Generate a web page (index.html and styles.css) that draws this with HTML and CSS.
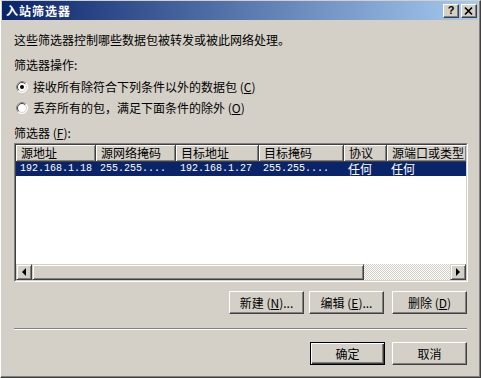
FILE: index.html
```html
<!DOCTYPE html>
<html lang="zh-CN">
<head>
  <meta charset="UTF-8" />
  <title>入站筛选器</title>
  <link rel="stylesheet" href="styles.css">
</head>
<body>
  <div class="window">
    <div class="titlebar">
      <span class="title">入站筛选器</span>
      <div class="caption-btns">
        <span class="cap-btn help">?</span>
        <span class="cap-btn close">
          <svg width="14" height="12" viewBox="0 0 14 12"><path d="M3 2.5 L10 9.5 M10 2.5 L3 9.5" stroke="#000" stroke-width="1.7" fill="none"/></svg>
        </span>
      </div>
    </div>

    <div class="content">
      <p class="desc">这些筛选器控制哪些数据包被转发或被此网络处理。</p>
      <p class="label ops">筛选器操作:</p>

      <div class="radio first">
        <svg class="radio-mark" width="12" height="12" viewBox="0 0 12 12">
          <circle cx="6" cy="6" r="5.5" fill="#fff" stroke="#fff"/>
          <path d="M2.1 9.9 A5.5 5.5 0 0 1 9.9 2.1" stroke="#808080" fill="none"/>
          <path d="M2.8 9.2 A4.5 4.5 0 0 1 9.2 2.8" stroke="#404040" fill="none"/>
          <path d="M9.2 2.8 A4.5 4.5 0 0 1 2.8 9.2" stroke="#d4d0c8" fill="none"/>
          <circle cx="6" cy="6" r="2" fill="#000"/>
        </svg>
        <span>接收所有除符合下列条件以外的数据包 (<u>C</u>)</span>
      </div>
      <div class="radio second">
        <svg class="radio-mark" width="12" height="12" viewBox="0 0 12 12">
          <circle cx="6" cy="6" r="5.5" fill="#fff" stroke="#fff"/>
          <path d="M2.1 9.9 A5.5 5.5 0 0 1 9.9 2.1" stroke="#808080" fill="none"/>
          <path d="M2.8 9.2 A4.5 4.5 0 0 1 9.2 2.8" stroke="#404040" fill="none"/>
          <path d="M9.2 2.8 A4.5 4.5 0 0 1 2.8 9.2" stroke="#d4d0c8" fill="none"/>
        </svg>
        <span>丢弃所有的包，满足下面条件的除外 (<u>O</u>)</span>
      </div>

      <p class="label filters">筛选器 (<u>F</u>):</p>

      <div class="listbox">
        <div class="list-inner">
          <div class="list-area">
            <div class="list-header">
              <span class="col c1">源地址</span>
              <span class="col c2">源网络掩码</span>
              <span class="col c3">目标地址</span>
              <span class="col c4">目标掩码</span>
              <span class="col c5">协议</span>
              <span class="col c6">源端口或类型</span>
            </div>
            <div class="list-row selected">
              <span class="cell c1 num">192.168.1.18</span>
              <span class="cell c2 num">255.255....</span>
              <span class="cell c3 num">192.168.1.27</span>
              <span class="cell c4 num">255.255....</span>
              <span class="cell c5">任何</span>
              <span class="cell c6">任何</span>
            </div>
          </div>
          <div class="hscroll">
            <span class="sb-btn">
              <svg width="14" height="14" viewBox="0 0 14 14"><polygon points="5,7 9,3 9,11" fill="#000"/></svg>
            </span>
            <span class="sb-thumb"></span>
            <span class="sb-track"></span>
            <span class="sb-btn">
              <svg width="14" height="14" viewBox="0 0 14 14"><polygon points="9,7 5,3 5,11" fill="#000"/></svg>
            </span>
          </div>
        </div>
      </div>

      <div class="actions list-actions">
        <button class="btn btn-new">新建 (<u>N</u>)...</button>
        <button class="btn btn-edit">编辑 (<u>E</u>)...</button>
        <button class="btn">删除 (<u>D</u>)</button>
      </div>

      <div class="separator"></div>

      <div class="actions dialog-actions">
        <button class="btn default">确定</button>
        <button class="btn">取消</button>
      </div>
    </div>
  </div>
</body>
</html>
```

FILE: styles.css
```css
html, body {
  margin: 0;
  padding: 0;
  background: #d4d0c8;
}

body {
  font-family: "Noto Sans CJK SC", "Liberation Sans", sans-serif;
  font-size: 12px;
  line-height: 14px;
  color: #000;
}

.window {
  width: 481px;
  height: 378px;
  box-sizing: border-box;
  background: #d4d0c8;
  border-top: 1px solid #d4d0c8;
  border-left: 1px solid #fff;
  border-right: 1px solid #404040;
  border-bottom: 1px solid #404040;
  box-shadow: inset -1px -1px #808080;
  padding: 0 2px 0 1px;
}

.titlebar {
  height: 19px;
  display: flex;
  align-items: center;
  background: linear-gradient(to right, #0a246a, #a6caf0);
  padding-left: 4px;
}

.title {
  color: #fff;
  font-weight: bold;
  letter-spacing: 1px;
}

.caption-btns {
  margin-left: auto;
  display: flex;
  gap: 2px;
  margin-right: 1px;
}

.cap-btn {
  width: 16px;
  height: 14px;
  box-sizing: border-box;
  background: #d4d0c8;
  border: 1px solid;
  border-color: #fff #404040 #404040 #fff;
  box-shadow: inset -1px -1px #808080;
  display: flex;
  align-items: center;
  justify-content: center;
}

.help {
  font-family: "Liberation Sans", sans-serif;
  font-weight: bold;
  font-size: 11px;
  line-height: 11px;
}

.content {
  padding: 0 10px 0 12px;
}

.desc,
.label {
  margin: 0;
  height: 14px;
}

.desc {
  margin-top: 13px;
}

.ops {
  margin-top: 11px;
}

.radio {
  display: flex;
  align-items: center;
  height: 14px;
  padding-left: 2px;
}

.radio-mark {
  margin-right: 5px;
}

.radio.first {
  margin-top: 8px;
}

.radio.second {
  margin-top: 7px;
}

.filters {
  margin-top: 11px;
}

.listbox {
  margin-top: 3px;
  height: 139px;
  box-sizing: border-box;
  border: 1px solid;
  border-color: #808080 #fff #fff #808080;
}

.list-inner {
  height: 100%;
  box-sizing: border-box;
  border: 1px solid;
  border-color: #404040 #d4d0c8 #d4d0c8 #404040;
  background: #fff;
  display: flex;
  flex-direction: column;
  overflow: hidden;
}

.list-area {
  flex: 1;
  overflow: hidden;
}

.list-header,
.list-row {
  display: flex;
  white-space: nowrap;
}

.list-header {
  height: 17px;
}

.col {
  flex: none;
  box-sizing: border-box;
  background: #d4d0c8;
  border-right: 1px solid #404040;
  border-bottom: 1px solid #404040;
  box-shadow: inset 1px 1px #fff, inset -1px -1px #808080;
  padding: 1px 0 0 5px;
  overflow: hidden;
}

.c1 { width: 80px; }
.c2 { width: 80px; }
.c3 { width: 83px; }
.c4 { width: 85px; }
.c5 { width: 43px; }
.c6 { width: 80px; }

.list-row {
  height: 14px;
}

.list-row.selected {
  background: #0a246a;
  color: #fff;
}

.cell {
  flex: none;
  box-sizing: border-box;
  padding-left: 4px;
  line-height: 14px;
}

.num {
  font-family: "Liberation Mono", monospace;
  font-size: 10px;
}

.hscroll {
  height: 16px;
  display: flex;
  flex: none;
}

.sb-btn,
.sb-thumb {
  box-sizing: border-box;
  background: #d4d0c8;
  border: 1px solid;
  border-color: #d4d0c8 #404040 #404040 #d4d0c8;
  box-shadow: inset 1px 1px #fff, inset -1px -1px #808080;
}

.sb-btn {
  width: 16px;
  display: flex;
  align-items: center;
  justify-content: center;
}

.sb-thumb {
  width: 332px;
}

.sb-track {
  flex: 1;
  background: repeating-conic-gradient(#fff 0 25%, #d4d0c8 0 50%) 0 0 / 2px 2px;
}

.actions {
  display: flex;
  justify-content: flex-end;
  padding-right: 1px;
}

.list-actions {
  margin-top: 9px;
}

.btn {
  width: 75px;
  height: 23px;
  box-sizing: border-box;
  margin: 0;
  padding: 0;
  font-family: inherit;
  font-size: 12px;
  line-height: 14px;
  color: #000;
  background: #d4d0c8;
  border: 1px solid;
  border-color: #fff #404040 #404040 #fff;
  box-shadow: inset -1px -1px #808080;
}

.btn-new {
  margin-right: 5px;
}

.btn-edit {
  margin-right: 8px;
}

.btn.default {
  border: 1px solid #000;
  box-shadow: inset 1px 1px #fff, inset -1px -1px #404040, inset -2px -2px #808080;
  margin-right: 7px;
}

.separator {
  margin-top: 14px;
  margin-right: 1px;
  border-top: 1px solid #808080;
  border-bottom: 1px solid #fff;
}

.dialog-actions {
  margin-top: 12px;
}
```
